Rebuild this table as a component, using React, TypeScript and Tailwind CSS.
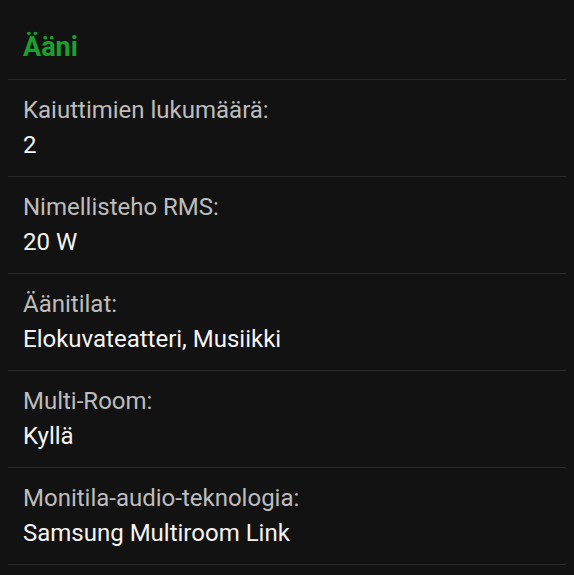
const rows = [
  { label: "Kaiuttimien lukumäärä:", value: "2" },
  { label: "Nimellisteho RMS:", value: "20 W" },
  { label: "Äänitilat:", value: "Elokuvateatteri, Musiikki" },
  { label: "Multi-Room:", value: "Kyllä" },
  { label: "Monitila-audio-teknologia:", value: "Samsung Multiroom Link" },
];

export default function App() {
  return (
    <div className="w-[574px] h-[575px] overflow-hidden bg-[#121212] px-2 font-['Roboto',sans-serif]">
      <div className="h-[80px] flex items-center px-[15px] pt-[16px] border-b border-[#2c2c2c]">
        <h2 className="text-[27px] font-bold text-[#1ba12b]">Ääni</h2>
      </div>
      {rows.map((r) => (
        <div key={r.label} className="px-[15px] pt-[13px] pb-[13px] border-b border-[#2c2c2c]">
          <div className="text-[24px] leading-[35px] text-[#bdbdbd]">{r.label}</div>
          <div className="text-[24px] leading-[35px] text-[#f4f4f4]">{r.value}</div>
        </div>
      ))}
    </div>
  );
}
